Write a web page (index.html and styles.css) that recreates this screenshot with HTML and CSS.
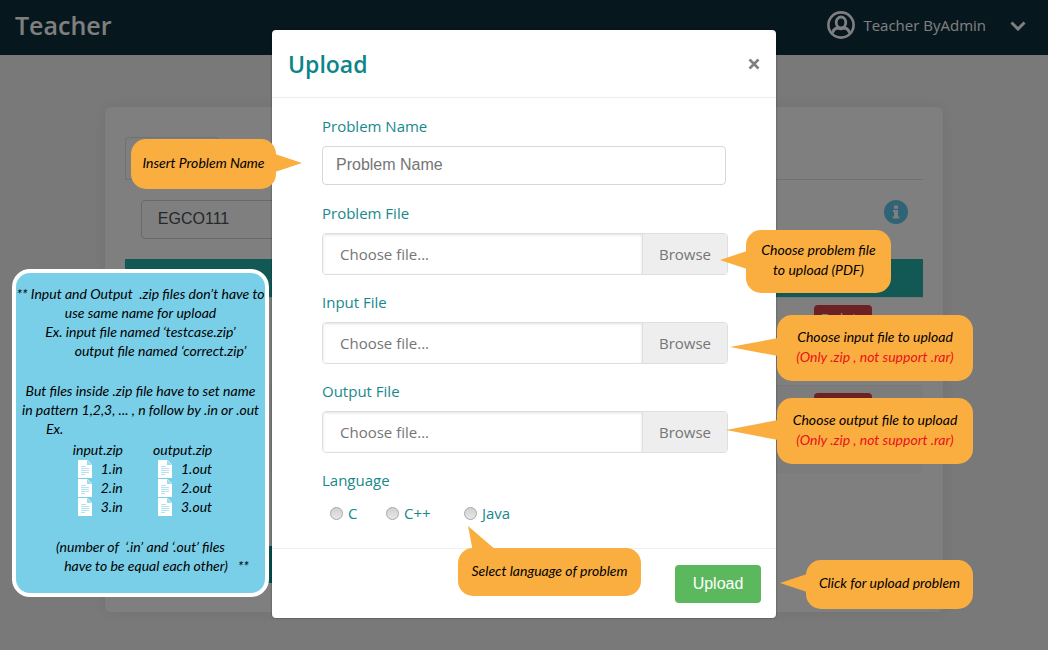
FILE: index.html
```html
<!DOCTYPE html>
<html lang="en">
<head>
<meta charset="utf-8">
<title>Teacher - Upload</title>
<link rel="stylesheet" href="styles.css">
</head>
<body>
<div class="page">
  <header class="topbar">
    <span class="brand">Teacher</span>
    <div class="user">
      <svg class="user-icon" viewBox="0 0 28 28" fill="none" stroke="currentColor">
        <circle cx="14" cy="14" r="12.6" stroke-width="2.6"/>
        <ellipse cx="14" cy="11.4" rx="4.800" ry="5.400" stroke-width="2.8"/>
        <path d="M5.500 21.800c1-3.400 3.200-4.800 5.800-4.800 1.700.9 3.700.9 5.400 0 2.600 0 4.800 1.400 5.800 4.800" stroke-width="2.8"/>
      </svg>
      <span class="user-name">Teacher ByAdmin</span>
      <svg class="chevron" viewBox="0 0 16 12" fill="none" stroke="currentColor" stroke-width="3"><path d="M1.500 3.500 8 10l6.500-6.500"/></svg>
    </div>
  </header>
  <main class="card">
    <div class="tabs"><div class="tab"></div></div>
    <div class="filters">
      <select class="course" aria-label="Course"><option>EGCO111</option></select>
      <svg class="info" viewBox="0 0 24 24"><circle cx="12" cy="12" r="12" fill="#5ec6ea"/><path d="M10 5.500h4v3.300h-4zM9 10h5v6.500h1.300v2H8.700v-2H10v-4.500H9z" fill="#fff"/></svg>
    </div>
    <table class="problems">
      <thead><tr><th></th></tr></thead>
      <tbody>
        <tr><td><button class="delete" type="button">Delete</button></td></tr>
        <tr><td><button class="delete" type="button" aria-label="Delete"></button></td></tr>
      </tbody>
    </table>
    <button class="add" type="button" aria-label="Add problem"></button>
  </main>
</div>
<div class="backdrop">
  <div class="modal" role="dialog" aria-labelledby="modal-title">
    <form class="form">
      <div class="modal-head">
        <h2 class="modal-title" id="modal-title">Upload</h2>
        <button class="close" type="button" aria-label="Close"><svg viewBox="0 0 12 12" stroke="currentColor" stroke-width="2.600"><path d="M1.500 1.500l9 9M10.500 1.500l-9 9"/></svg></button>
      </div>
      <div class="modal-body">
        <div class="field">
          <label class="label" for="name">Problem Name</label>
          <input class="text" id="name" type="text" placeholder="Problem Name">
        </div>
        <div class="field">
          <label class="label" for="file1">Problem File</label>
          <div class="file"><input class="file-name" id="file1" type="text" placeholder="Choose file..." readonly><button class="browse" type="button">Browse</button></div>
        </div>
        <div class="field">
          <label class="label" for="file2">Input File</label>
          <div class="file"><input class="file-name" id="file2" type="text" placeholder="Choose file..." readonly><button class="browse" type="button">Browse</button></div>
        </div>
        <div class="field">
          <label class="label" for="file3">Output File</label>
          <div class="file"><input class="file-name" id="file3" type="text" placeholder="Choose file..." readonly><button class="browse" type="button">Browse</button></div>
        </div>
        <fieldset class="languages">
          <legend class="label">Language</legend>
          <div class="options">
            <label class="option"><input class="radio" type="radio" name="lang">C</label>
            <label class="option"><input class="radio" type="radio" name="lang">C++</label>
            <label class="option"><input class="radio" type="radio" name="lang">Java</label>
          </div>
        </fieldset>
      </div>
      <div class="modal-foot"><button class="submit" type="button">Upload</button></div>
    </form>

    <div class="callout tip-name">Insert Problem Name<svg class="tail" viewBox="0 0 27 18"><path d="M0 0l27 9L0 18z"/></svg></div>
    <div class="callout tip-problem">Choose problem file<br>to upload (PDF)<svg class="tail tail-left" viewBox="0 0 27 18"><path d="M27 0L0 9l27 9z"/></svg></div>
    <div class="callout tip-input">Choose input file to upload<span class="warn">(Only .zip , not support .rar)</span><svg class="tail tail-long" viewBox="0 0 48 18"><path d="M48 0L0 9l48 9z"/></svg></div>
    <div class="callout tip-output">Choose output file to upload<span class="warn">(Only .zip , not support .rar)</span><svg class="tail tail-wide" viewBox="0 0 52 20"><path d="M52 0L0 10l52 10z"/></svg></div>
    <div class="callout tip-language">Select language of problem<svg class="tail tail-up" viewBox="0 0 28 26"><path d="M0 0l28 24v2H5z"/></svg></div>
    <div class="callout tip-upload">Click for upload problem<svg class="tail tail-left" viewBox="0 0 27 18"><path d="M27 0L0 9l27 9z"/></svg></div>

    <aside class="note">
      <p class="line">** Input and Output&nbsp; .zip files don’t have to</p>
      <p class="line">use same name for upload</p>
      <p class="line">Ex. input file named ‘testcase.zip’</p>
      <p class="line in-wide">output file named ‘correct.zip’</p>
      <p class="line gap">But files inside .zip file have to set name</p>
      <p class="line">in pattern 1,2,3, ... , n follow by .in or .out</p>
      <p class="line start">Ex.</p>
      <div class="zips">
        <div class="zip"><span>input.zip</span>
          <span class="entry"><svg class="doc" viewBox="0 0 14 18"><use href="#doc"/></svg>1.in</span>
          <span class="entry"><svg class="doc" viewBox="0 0 14 18"><use href="#doc"/></svg>2.in</span>
          <span class="entry"><svg class="doc" viewBox="0 0 14 18"><use href="#doc"/></svg>3.in</span>
        </div>
        <div class="zip"><span>output.zip</span>
          <span class="entry"><svg class="doc" viewBox="0 0 14 18"><use href="#doc"/></svg>1.out</span>
          <span class="entry"><svg class="doc" viewBox="0 0 14 18"><use href="#doc"/></svg>2.out</span>
          <span class="entry"><svg class="doc" viewBox="0 0 14 18"><use href="#doc"/></svg>3.out</span>
        </div>
      </div>
      <p class="line gap">(number of&nbsp; ‘.in’ and ‘.out’ files</p>
      <p class="line in-last">have to be equal each other)&nbsp;&nbsp; **</p>
    </aside>
  </div>
</div>
<svg class="defs" aria-hidden="true"><symbol id="doc" viewBox="0 0 14 18"><path d="M0 0h9.500L14 4.500V18H0z" fill="#fff"/><path d="M9 0v5h5z" fill="#9fd9ec"/><path d="M3 6.500h5M3 8.500h8M3 10.500h8M3 12.500h8M3 14.500h4" stroke="#b5e2f0" fill="none"/></symbol></svg>
</body>
</html>
```
FILE: styles.css
```css
* { box-sizing: border-box; }
body {
  margin: 0;
  min-height: 100vh;
  background: #f3f3f3;
  font-family: "Open Sans", "Noto Sans", sans-serif;
  font-size: 15px;
  color: #495057;
}
input, button, select { font: inherit; color: inherit; margin: 0; }
.defs { position: absolute; width: 0; height: 0; }

.topbar {
  display: flex;
  align-items: center;
  justify-content: space-between;
  height: 55px;
  padding: 0 22px 6px 15px;
  background: #0e2e3c;
  color: #fff;
}
.brand { font-size: 25px; font-weight: 600; }
.user { display: flex; align-items: center; }
.user-icon { width: 28px; height: 28px; margin-right: 8px; }
.user-name { font-size: 15px; }
.chevron { width: 16px; height: 12px; margin-left: 24px; }

.card {
  width: 80%;
  margin: 52px auto 38px;
  padding: 30px 20px 29px;
  background: #fff;
  border-radius: 6px;
  box-shadow: 0 0 16px rgba(0, 0, 0, .08);
}
.tabs { border-bottom: 1px solid #dee2e6; }
.tab {
  width: 94px;
  height: 42px;
  border: 1px solid #dee2e6;
  border-bottom: 0;
  border-radius: 4px 4px 0 0;
}
.filters {
  display: flex;
  align-items: flex-start;
  justify-content: space-between;
  padding: 20px 15px 20px 16px;
}
.course {
  width: 200px;
  height: 39px;
  padding: 0 16px 2px;
  border: 1px solid #ced4da;
  border-radius: 4px;
  background: #fff;
  appearance: none;
  font-family: "Liberation Sans", Arial, sans-serif;
  font-size: 16px;
}
.info { width: 24px; height: 24px; }
.problems { width: 100%; border-collapse: collapse; }
.problems th { height: 38px; padding: 0; background: #24b0a8; }
.problems td { height: 88px; padding: 7px 51px 0; text-align: right; vertical-align: top; border-top: 1px solid #f0f0f0; }
.problems tbody tr:nth-child(even) { background: #f8f8f8; }
.delete {
  display: inline-flex;
  justify-content: center;
  width: 58px;
  height: 71px;
  padding: 3px 0;
  border: 0;
  border-radius: 4px;
  background: #d9434a;
  color: #fff;
}
.add {
  display: block;
  width: 170px;
  height: 37px;
  margin-top: 73px;
  border: 0;
  background: #0b9a94;
}

.backdrop {
  position: absolute;
  inset: 0;
  min-height: 650px;
  padding: 30px 0;
  background: rgba(0, 0, 0, .5);
}
.modal {
  position: relative;
  width: 504px;
  margin: 0 auto;
  background: #fff;
  border-radius: 4px;
  box-shadow: 0 0 2px rgba(0, 0, 0, .5);
}
.modal-head {
  display: flex;
  align-items: center;
  justify-content: space-between;
  height: 68px;
  padding: 0 16px;
  border-bottom: 1px solid #ececec;
}
.modal-title { margin: 0; color: #0b8587; font-size: 23px; font-weight: 600; }
.close { display: flex; padding: 0; border: 0; background: none; color: #808080; }
.close svg { width: 12px; height: 12px; }
.modal-body { padding: 18px 48px 24px 50px; }
.field { margin-bottom: 17px; }
.field:first-child { margin-bottom: 18px; padding-right: 2px; }
.label { display: block; height: 20px; margin-bottom: 10px; padding: 0; line-height: 20px; color: #17898b; }
.text {
  display: block;
  width: 100%;
  height: 39px;
  padding: 0 13px 2px;
  border: 1px solid #d8d8d8;
  border-radius: 4px;
  font-family: "Liberation Sans", Arial, sans-serif;
  font-size: 16px;
}
.text::placeholder, .file-name::placeholder { color: #757575; opacity: 1; }
.file {
  display: flex;
  height: 42px;
  border: 1px solid #dedede;
  border-radius: 4px;
  overflow: hidden;
}
.file-name { flex: 1; min-width: 0; padding: 0 17px; border: 0; box-shadow: inset 0 1px 3px rgba(0, 0, 0, .12); }
.browse { width: 85px; padding: 0; border: 0; border-left: 1px solid #dedede; background: #eee; color: #757575; }
.languages { min-width: 0; margin: 0; padding: 2px 0 0; border: 0; }
.options { display: grid; grid-template-columns: 56px 78px auto; padding-left: 8px; }
.option { display: flex; align-items: center; gap: 5px; color: #17898b; line-height: 22px; }
.radio {
  width: 13px;
  height: 13px;
  appearance: none;
  border: 1px solid #a6a6a6;
  border-radius: 50%;
  background: linear-gradient(#d2d2d2, #e6e6e6);
}
.modal-foot {
  display: flex;
  justify-content: flex-end;
  padding: 16px 15px 15px;
  border-top: 1px solid #f0f0f0;
}
.submit {
  width: 86px;
  height: 38px;
  padding: 0;
  border: 0;
  border-radius: 4px;
  background: #5cb85c;
  color: #fff;
  font-family: "Liberation Sans", Arial, sans-serif;
  font-size: 16px;
}

.callout {
  position: absolute;
  display: flex;
  flex-direction: column;
  justify-content: center;
  align-items: center;
  padding-bottom: 3px;
  border-radius: 15px;
  background: #faae40;
  color: #000;
  font: italic 14px/20px Lato, "Open Sans", sans-serif;
  text-align: center;
  white-space: nowrap;
}
.warn { color: #e8111c; }
.tail { position: absolute; left: 100%; width: 27px; height: 18px; margin-left: -1px; fill: #faae40; }
.tail-left { left: auto; right: 100%; margin: 0 -1px 0 0; }
.tail-long { left: auto; right: 100%; width: 48px; margin: 0 -1px 0 0; }
.tail-wide { left: auto; right: 100%; width: 52px; height: 20px; margin: 0 -1px 0 0; }
.tail-up { left: 10px; top: -22px; width: 28px; height: 26px; margin: 0; }
.tip-name { left: -141px; top: 109px; width: 145px; height: 50px; }
.tip-problem { left: 474px; top: 200px; width: 145px; height: 63px; }
.tip-input { left: 505px; top: 285px; width: 196px; height: 66px; }
.tip-output { left: 505px; top: 368px; width: 196px; height: 66px; }
.tip-language { left: 186px; top: 518px; width: 183px; height: 48px; }
.tip-upload { left: 534px; top: 530px; width: 167px; height: 49px; }

.note {
  position: absolute;
  left: -260px;
  top: 239px;
  width: 257px;
  padding: 11px 0 18px;
  border: 4px solid #fff;
  border-radius: 18px;
  background: #7acfe8;
  color: #000;
  font: italic 14px/19px Lato, "Open Sans", sans-serif;
  text-align: center;
  white-space: nowrap;
}
.line { margin: 0; }
.gap { margin-top: 21px; }
.in-wide { padding-left: 40px; }
.in-last { padding-left: 32px; }
.start { padding-left: 30px; text-align: left; }
.zips { display: flex; justify-content: center; gap: 30px; padding: 2px 0 0 4px; }
.zip { display: flex; flex-direction: column; }
.entry { display: flex; align-items: center; gap: 9px; padding-left: 5px; }
.doc { width: 14px; height: 18px; }
```
